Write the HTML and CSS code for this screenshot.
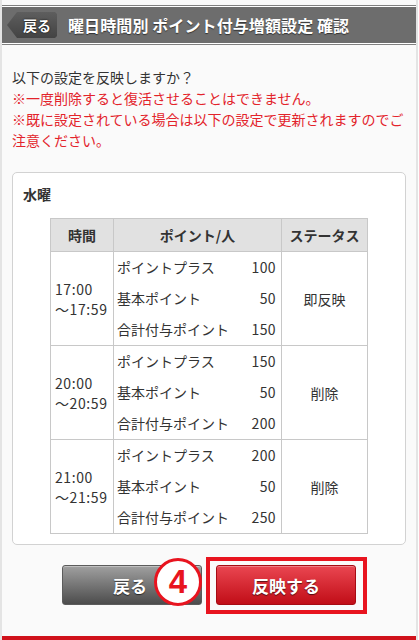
FILE: index.html
```html
<!DOCTYPE html>
<html lang="ja">
<head>
<meta charset="utf-8">
<title>曜日時間別 ポイント付与増額設定 確認</title>
<link rel="stylesheet" href="styles.css">
</head>
<body>
<div class="page">
  <div class="topstrip"></div>
  <header class="header">
    <div class="header-band">
      <a class="back-btn" href="#"><span>戻る</span></a>
      <h1 class="title">曜日時間別 ポイント付与増額設定 確認</h1>
    </div>
  </header>

  <div class="notice">
    <p class="q">以下の設定を反映しますか？</p>
    <p class="warn">※一度削除すると復活させることはできません。</p>
    <p class="warn">※既に設定されている場合は以下の設定で更新されますのでご注意ください。</p>
  </div>

  <section class="card">
    <h2 class="day">水曜</h2>
    <table class="tbl">
      <colgroup>
        <col class="c-time">
        <col class="c-pt">
        <col class="c-st">
      </colgroup>
      <thead>
        <tr><th>時間</th><th>ポイント/人</th><th>ステータス</th></tr>
      </thead>
      <tbody>
        <tr>
          <td class="time">17:00<br>～17:59</td>
          <td class="pts">
            <div class="pt"><span>ポイントプラス</span><span class="num">100</span></div>
            <div class="pt"><span>基本ポイント</span><span class="num">50</span></div>
            <div class="pt"><span>合計付与ポイント</span><span class="num">150</span></div>
          </td>
          <td class="st">即反映</td>
        </tr>
        <tr>
          <td class="time">20:00<br>～20:59</td>
          <td class="pts">
            <div class="pt"><span>ポイントプラス</span><span class="num">150</span></div>
            <div class="pt"><span>基本ポイント</span><span class="num">50</span></div>
            <div class="pt"><span>合計付与ポイント</span><span class="num">200</span></div>
          </td>
          <td class="st">削除</td>
        </tr>
        <tr>
          <td class="time">21:00<br>～21:59</td>
          <td class="pts">
            <div class="pt"><span>ポイントプラス</span><span class="num">200</span></div>
            <div class="pt"><span>基本ポイント</span><span class="num">50</span></div>
            <div class="pt"><span>合計付与ポイント</span><span class="num">250</span></div>
          </td>
          <td class="st">削除</td>
        </tr>
      </tbody>
    </table>
  </section>

  <div class="actions">
    <div class="btn-wrap">
      <a class="btn btn-gray" href="#">戻る</a>
      <span class="badge">4</span>
    </div>
    <div class="btn-wrap">
      <a class="btn btn-red" href="#">反映する</a>
      <span class="frame"></span>
    </div>
  </div>

  <div class="footer-line"></div>
</div>
</body>
</html>
```

FILE: styles.css
```css
html, body {
  margin: 0;
  padding: 0;
  background: #ffffff;
}
body {
  font-family: "Noto Sans CJK JP", "Noto Sans", sans-serif;
  color: #333333;
  font-size: 14px;
}
p, h1, h2 { margin: 0; }

.page {
  width: 414px;
  background: #fafafa;
  border-left: 2px solid #e4e4e4;
  border-right: 2px solid #e4e4e4;
}

.topstrip {
  height: 5px;
  background: #fafafa;
}

.header {
  border-top: 1px solid #808080;
  border-bottom: 1px solid #808080;
  padding: 1px 0;
  background: #ffffff;
}
.header-band {
  height: 36px;
  background: #6d6d6d;
  display: flex;
  align-items: center;
}

.back-btn {
  margin-left: 5px;
  width: 50px;
  height: 26px;
  display: flex;
  align-items: center;
  justify-content: center;
  padding-left: 10px;
  box-sizing: border-box;
  text-decoration: none;
  background: linear-gradient(#5e5e5e, #434343);
  clip-path: polygon(0 50%, 10px 0, 48px 0, 50px 2px, 50px 24px, 48px 26px, 10px 100%);
}
.back-btn span {
  color: #ffffff;
  font-weight: bold;
  font-size: 14px;
  line-height: 1;
  text-shadow: 0 0 2px #000;
}

.title {
  margin-left: 11px;
  color: #ffffff;
  font-size: 16px;
  font-weight: bold;
  line-height: 1;
  letter-spacing: 0.1px;
  text-shadow: 0 1px 1px rgba(0,0,0,.55);
  white-space: nowrap;
}

.notice {
  padding: 22px 10px 0 10px;
  line-height: 21px;
  font-size: 14px;
}
.warn { color: #e3232b; }

.card {
  margin: 21px 10px 0 10px;
  background: #ffffff;
  border: 1px solid #d2d2d2;
  border-radius: 5px;
  padding: 12px 0 10px 0;
}
.day {
  font-size: 14px;
  font-weight: bold;
  line-height: 18px;
  padding-left: 10px;
  margin-bottom: 15px;
}

.tbl {
  width: 317px;
  margin: 0 auto;
  border-collapse: collapse;
  table-layout: fixed;
  font-size: 14px;
}
.c-time { width: 63px; }
.c-pt { width: 168px; }
.c-st { width: 86px; }

.tbl th, .tbl td {
  border: 1px solid #c8c8c8;
  padding: 0;
}
.tbl th {
  height: 32px;
  background: #e1e1e1;
  font-weight: bold;
  text-align: center;
  vertical-align: middle;
  line-height: 20px;
}
.tbl td.time {
  padding-left: 4px;
  line-height: 20px;
  vertical-align: middle;
  white-space: nowrap;
  letter-spacing: 0.6px;
}
.tbl td.pts {
  padding: 0 5px 0 3px;
}
.pt {
  display: flex;
  justify-content: space-between;
  height: 31px;
  line-height: 31px;
  white-space: nowrap;
}
.num {
  letter-spacing: 0.4px;
}
.tbl td.st {
  text-align: center;
  vertical-align: middle;
}

.actions {
  display: flex;
  justify-content: center;
  gap: 14px;
  margin: 20px 0 31px 0;
}
.btn-wrap {
  position: relative;
}
.btn {
  display: flex;
  align-items: center;
  justify-content: center;
  width: 140px;
  height: 40px;
  box-sizing: border-box;
  border-radius: 3px;
  color: #ffffff;
  font-weight: bold;
  font-size: 17px;
  text-decoration: none;
  text-shadow: 0 1px 1px rgba(0,0,0,.6);
}
.btn-gray {
  background: linear-gradient(#a0a0a0, #4c4c4c);
  border: 1px solid #5c5c5c;
  box-shadow: inset 0 1px 0 rgba(255,255,255,.35);
  padding-right: 4px;
}
.btn-red {
  background: linear-gradient(#ea4651, #c10d17);
  border: 1px solid #a60b13;
  box-shadow: inset 0 1px 0 rgba(255,255,255,.3);
}

.badge {
  position: absolute;
  left: 92px;
  top: -7px;
  width: 48px;
  height: 48px;
  box-sizing: border-box;
  border: 3px solid #e8141f;
  border-radius: 50%;
  background: #ffffff;
  color: #e8141f;
  font-family: "Liberation Sans Narrow", "Liberation Sans", Arial, sans-serif;
  font-weight: bold;
  font-size: 33px;
  line-height: 42px;
  text-align: center;
}

.frame {
  position: absolute;
  left: -10px;
  right: -11px;
  top: -8px;
  bottom: -9px;
  border: 4px solid #e8141f;
  pointer-events: none;
}

.footer-line {
  height: 5px;
  background: #d0121b;
}
```
